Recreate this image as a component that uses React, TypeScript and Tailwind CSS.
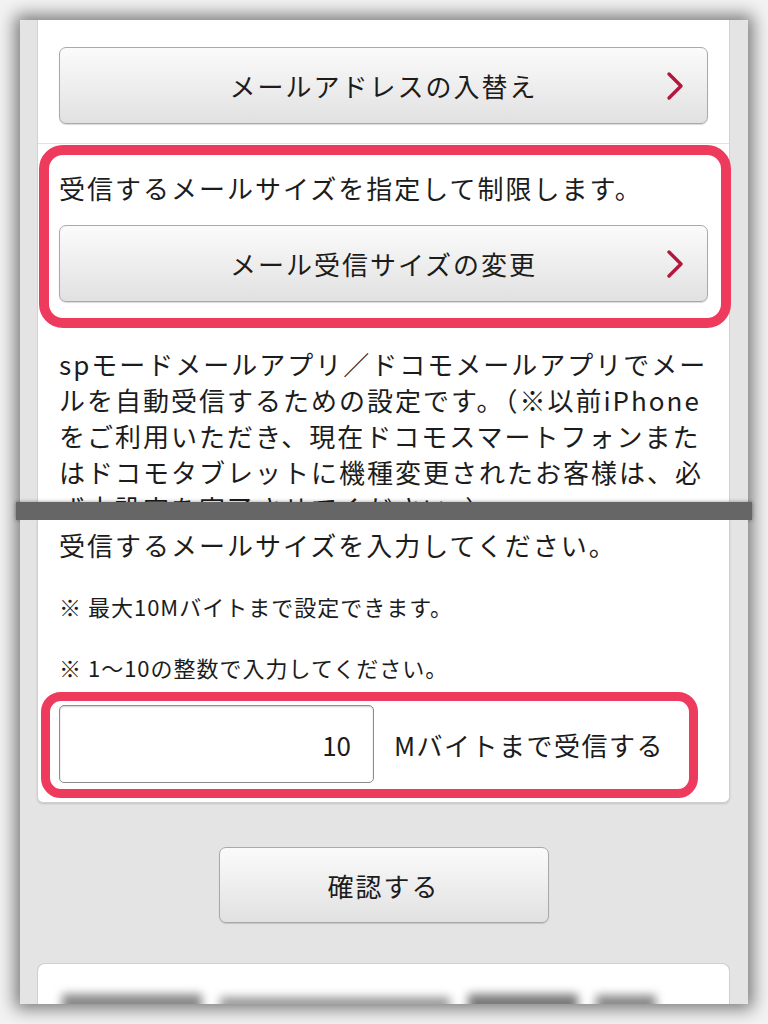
const jp = "font-['Noto_Sans_CJK_JP','Noto_Sans',sans-serif]";

function Chevron() {
  return (
    <svg
      width="18"
      height="30"
      viewBox="0 0 18 30"
      className="absolute right-[23px] top-1/2 -translate-y-1/2"
    >
      <polyline
        points="3,3 15,15 3,27"
        fill="none"
        stroke="#b3173e"
        strokeWidth="3.4"
        strokeLinecap="round"
        strokeLinejoin="round"
      />
    </svg>
  );
}

function MenuButton({label}: {label: string}) {
  return (
    <button
      type="button"
      className="relative flex h-[77px] w-full shrink-0 items-center justify-center rounded-[7px] border border-[#a9a9a9] bg-gradient-to-b from-[#fbfbfb] to-[#e1e1e1] text-[26px] tracking-[2px] text-[#1c1c1c] shadow-[0_1px_1px_rgba(0,0,0,0.15)]"
    >
      {label}
      <Chevron />
    </button>
  );
}

const intro = [
  'spモードメールアプリ／ドコモメールアプリでメー',
  'ルを自動受信するための設定です。（※以前iPhone',
  'をご利用いただき、現在ドコモスマートフォンまた',
  'はドコモタブレットに機種変更されたお客様は、必',
  'ず本設定を完了させてください。）',
];

export default function App() {
  return (
    <main className={`h-[1024px] w-[768px] bg-[#f3f3f3] p-[20px] ${jp} text-[#1c1c1c]`}>
      <div className="flex h-[984px] w-[728px] flex-col shadow-[0_0_16px_5px_rgba(0,0,0,0.5)]">
        {/* upper capture */}
        <section className="h-[482px] shrink-0 overflow-hidden bg-[#e4e4e4] pl-[17px] pr-[18px]">
          <div className="min-h-full border-x border-[#d2d2d2] bg-white px-[21px] pt-[27px]">
            <MenuButton label="メールアドレスの入替え" />
            <div className="-mx-[21px] mt-[19px] h-px bg-[#e2e2e2]" />
            <div className="-ml-[20px] -mr-[23px] mt-px rounded-[24px] border-[10px] border-[#ee3a5c] pb-[16px] pl-[10px] pr-[13px] pt-[15px]">
              <p className="whitespace-nowrap text-[26px] leading-[35px] tracking-[2px]">
                受信するメールサイズを指定して制限します。
              </p>
              <div className="mt-[20px]">
                <MenuButton label="メール受信サイズの変更" />
              </div>
            </div>
            <div className="mt-[18px] text-[26px] leading-[36px] tracking-[2px]">
              {intro.map((line) => (
                <div key={line} className="whitespace-nowrap">
                  {line}
                </div>
              ))}
            </div>
          </div>
        </section>

        <div className="-mx-[4px] h-[18px] shrink-0 bg-[#666666] shadow-[0_0_4px_rgba(0,0,0,0.4)]" />

        {/* lower capture */}
        <section className="flex h-[484px] shrink-0 flex-col overflow-hidden bg-[#e4e4e4] pl-[17px] pr-[18px]">
          <div className="flex shrink-0 flex-col rounded-b-[6px] border-x border-b border-[#cfcfcf] bg-white px-[21px] pb-[4px] pt-[7px] shadow-[0_1px_2px_rgba(0,0,0,0.15)]">
            <p className="whitespace-nowrap text-[26px] leading-[36px] tracking-[2px]">
              受信するメールサイズを入力してください。
            </p>
            <p className="mt-[28px] whitespace-nowrap text-[22px] leading-[30px] tracking-[1px]">
              ※ 最大10Mバイトまで設定できます。
            </p>
            <p className="mt-[31px] whitespace-nowrap text-[22px] leading-[30px] tracking-[1px]">
              ※ 1〜10の整数で入力してください。
            </p>
            <div className="-ml-[18px] mt-[10px] flex w-[657px] items-center rounded-[20px] border-[9px] border-[#ee3a5c] pb-[6px] pl-[9px] pt-[4px]">
              <div className="flex h-[78px] w-[315px] items-center justify-end rounded-[5px] border border-[#8c8c8c] bg-white pr-[22px] text-[26px] shadow-[inset_0_1px_2px_rgba(0,0,0,0.2)]">
                10
              </div>
              <span className="ml-[20px] whitespace-nowrap text-[26px] tracking-[1.5px]">
                Mバイトまで受信する
              </span>
            </div>
          </div>

          <button
            type="button"
            className="mt-[44px] flex h-[76px] w-[330px] shrink-0 items-center justify-center self-center rounded-[7px] border border-[#a9a9a9] bg-gradient-to-b from-[#fbfbfb] to-[#e1e1e1] text-[26px] tracking-[2px] shadow-[0_1px_1px_rgba(0,0,0,0.15)]"
          >
            確認する
          </button>

          <div className="mt-[40px] flex-1 rounded-t-[8px] border-x border-t border-[#cfcfcf] bg-white px-[24px] pt-[30px]">
            <div className="flex items-center gap-[18px] blur-[5px]">
              <div className="h-[20px] w-[140px] bg-[#8a8a8a]" />
              <div className="h-[14px] w-[230px] bg-[#9a9a9a]" />
              <div className="h-[20px] w-[110px] bg-[#7a7a7a]" />
              <div className="h-[18px] w-[60px] bg-[#8a8a8a]" />
            </div>
          </div>
        </section>
      </div>
    </main>
  );
}
